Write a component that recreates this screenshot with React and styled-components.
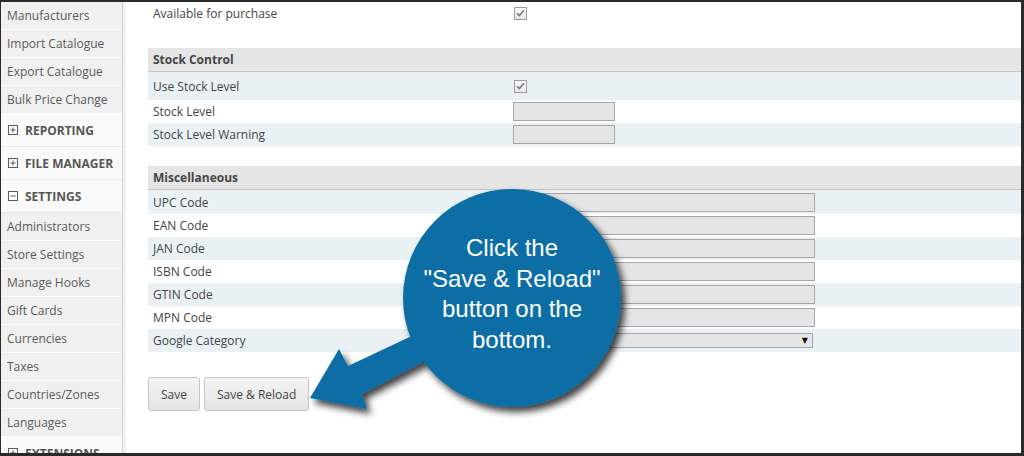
import React from "react"
import styled, { createGlobalStyle } from "styled-components"

const GlobalStyle = createGlobalStyle`
  html, body {
    margin: 0;
    padding: 0;
    background: #fff;
  }
  * {
    box-sizing: border-box;
  }
`

const sidebarGroups = [
  { type: "item", label: "Manufacturers" },
  { type: "item", label: "Import Catalogue" },
  { type: "item", label: "Export Catalogue" },
  { type: "item", label: "Bulk Price Change" },
  { type: "header", label: "Reporting", open: false },
  { type: "header", label: "File Manager", open: false },
  { type: "header", label: "Settings", open: true },
  { type: "item", label: "Administrators" },
  { type: "item", label: "Store Settings" },
  { type: "item", label: "Manage Hooks" },
  { type: "item", label: "Gift Cards" },
  { type: "item", label: "Currencies" },
  { type: "item", label: "Taxes" },
  { type: "item", label: "Countries/Zones" },
  { type: "item", label: "Languages" },
  { type: "header", label: "Extensions", open: false },
]

const stockRows = [
  { label: "Use Stock Level", field: "check", height: 28 },
  { label: "Stock Level", field: "short" },
  { label: "Stock Level Warning", field: "short" },
]

const miscRows = [
  { label: "UPC Code", field: "long", height: 24 },
  { label: "EAN Code", field: "long" },
  { label: "JAN Code", field: "long" },
  { label: "ISBN Code", field: "long" },
  { label: "GTIN Code", field: "long" },
  { label: "MPN Code", field: "long" },
  { label: "Google Category", field: "select" },
]

const ToggleIcon = ({ open }) => (
  <svg width="10" height="10" viewBox="0 0 10 10">
    <rect x="0.5" y="0.5" width="9" height="9" fill="none" stroke="#5a5a5a" />
    <line x1="2.5" y1="5" x2="7.5" y2="5" stroke="#5a5a5a" />
    {!open && <line x1="5" y1="2.5" x2="5" y2="7.5" stroke="#5a5a5a" />}
  </svg>
)

const Checkbox = () => (
  <CheckBox>
    <svg width="9" height="8" viewBox="0 0 9 8">
      <path d="M1 4.2 L3.3 6.5 L8 1.2" fill="none" stroke="#7a7a7a" strokeWidth="1.6" />
    </svg>
  </CheckBox>
)

const Field = ({ type }) => {
  if (type === "check") return <Checkbox />
  if (type === "select")
    return (
      <SelectBox>
        <span>▼</span>
      </SelectBox>
    )
  return <TextInput $wide={type === "long"} />
}

const Section = ({ title, rows }) => (
  <SectionWrap>
    <SectionHeader>{title}</SectionHeader>
    {rows.map((row, i) => (
      <Row key={row.label} $striped={i % 2 === 0} $height={row.height || 23}>
        <Label>{row.label}</Label>
        <Value>
          <Field type={row.field} />
        </Value>
      </Row>
    ))}
  </SectionWrap>
)

const App = () => {
  return (
    <>
      <GlobalStyle />
      <Frame>
        <Sidebar>
          {sidebarGroups.map(entry =>
            entry.type === "header" ? (
              <NavHeader key={entry.label}>
                <ToggleIcon open={entry.open} />
                {entry.label.toUpperCase()}
              </NavHeader>
            ) : (
              <NavItem key={entry.label}>{entry.label}</NavItem>
            )
          )}
        </Sidebar>
        <Content>
          <Row $height={22}>
            <Label>Available for purchase</Label>
            <Value>
              <Checkbox />
            </Value>
          </Row>
          <Section title="Stock Control" rows={stockRows} />
          <Section title="Miscellaneous" rows={miscRows} />
          <ButtonBar>
            <Button>Save</Button>
            <Button>Save &amp; Reload</Button>
          </ButtonBar>
        </Content>

        <Callout viewBox="0 0 1024 456" width="1024" height="456">
          <defs>
            <filter id="calloutShadow" x="-20%" y="-20%" width="140%" height="140%">
              <feDropShadow dx="4" dy="5" stdDeviation="3.5" floodColor="#000" floodOpacity="0.75" />
            </filter>
          </defs>
          <g filter="url(#calloutShadow)" fill="#0d6ea6">
            <circle cx="512" cy="298" r="109" />
            <polygon points="310,398 339,349 348,366 450,318 462,342 362,394 367,409" />
          </g>
        </Callout>
        <CalloutText>
          Click the
          <br />
          "Save &amp; Reload"
          <br />
          button on the
          <br />
          bottom.
        </CalloutText>
      </Frame>
    </>
  )
}

export default App

const Frame = styled.div`
  position: relative;
  width: 1024px;
  height: 456px;
  display: flex;
  overflow: hidden;
  background: #fff;
  border-style: solid;
  border-color: #2a2a2a;
  border-width: 2px 3px 3px 1px;
  font-family: "Open Sans", "Liberation Sans", sans-serif;
  font-size: 12px;
`

const Sidebar = styled.nav`
  width: 122px;
  flex: none;
  border-right: 1px solid #d2d2d2;
  background: #fafafa;
`

const NavItem = styled.div`
  height: 28px;
  display: flex;
  align-items: center;
  padding-left: 6px;
  background: #f0f0f0;
  border-bottom: 1px solid #fbfbfb;
  color: #5a5a5a;
  white-space: nowrap;
`

const NavHeader = styled.div`
  height: 33px;
  display: flex;
  align-items: center;
  gap: 7px;
  padding-left: 7px;
  background: #fafafa;
  border-bottom: 1px solid #e9e9e9;
  color: #555;
  font-weight: 700;
  white-space: nowrap;
`

const Content = styled.main`
  flex: 1;
  min-width: 0;
  border-left: 3px solid #f1f1f1;
  padding-left: 22px;
  color: #444;
`

const SectionWrap = styled.section`
  margin-top: 20px;

  &:first-of-type {
    margin-top: 24px;
  }
`

const SectionHeader = styled.div`
  height: 24px;
  display: flex;
  align-items: center;
  padding-left: 5px;
  background: #e5e5e5;
  border-bottom: 1px solid #c4c4c4;
  font-weight: 700;
  color: #454545;
`

const Row = styled.div`
  display: grid;
  grid-template-columns: 365px 1fr;
  align-items: center;
  height: ${p => p.$height}px;
  background: ${p => (p.$striped ? "#eaf1f5" : "transparent")};
`

const Label = styled.div`
  padding-left: 5px;
  white-space: nowrap;
`

const Value = styled.div`
  display: flex;
  align-items: center;
`

const CheckBox = styled.span`
  width: 13px;
  height: 13px;
  margin-left: 1px;
  display: flex;
  align-items: center;
  justify-content: center;
  border: 1px solid #9c9c9c;
  background: linear-gradient(#fbfbfb, #e6e6e6);
`

const TextInput = styled.span`
  display: block;
  width: ${p => (p.$wide ? 302 : 102)}px;
  height: 19px;
  border: 1px solid #a6a6a6;
  background: #e5e5e5;
`

const SelectBox = styled.span`
  width: 300px;
  height: 15px;
  display: flex;
  align-items: center;
  justify-content: flex-end;
  padding-right: 4px;
  border: 1px solid #a6a6a6;
  background: #e5e5e5;
  color: #111;
  font-family: "DejaVu Sans", sans-serif;
  font-size: 8px;
`

const ButtonBar = styled.div`
  display: flex;
  gap: 4px;
  margin-top: 25px;
`

const Button = styled.button`
  height: 34px;
  padding: 0 12px;
  border: 1px solid #c6c6c6;
  border-radius: 3px;
  background: linear-gradient(#f4f4f4, #e4e4e4);
  color: #444;
  font-family: "Open Sans", "Liberation Sans", sans-serif;
  font-size: 12px;
`

const Callout = styled.svg`
  position: absolute;
  top: -2px;
  left: -1px;
  pointer-events: none;
`

const CalloutText = styled.div`
  position: absolute;
  left: 403px;
  top: 231px;
  width: 216px;
  text-align: center;
  color: #fff;
  font-family: "Liberation Sans", Arial, sans-serif;
  font-size: 24px;
  line-height: 30.5px;
  pointer-events: none;
`
